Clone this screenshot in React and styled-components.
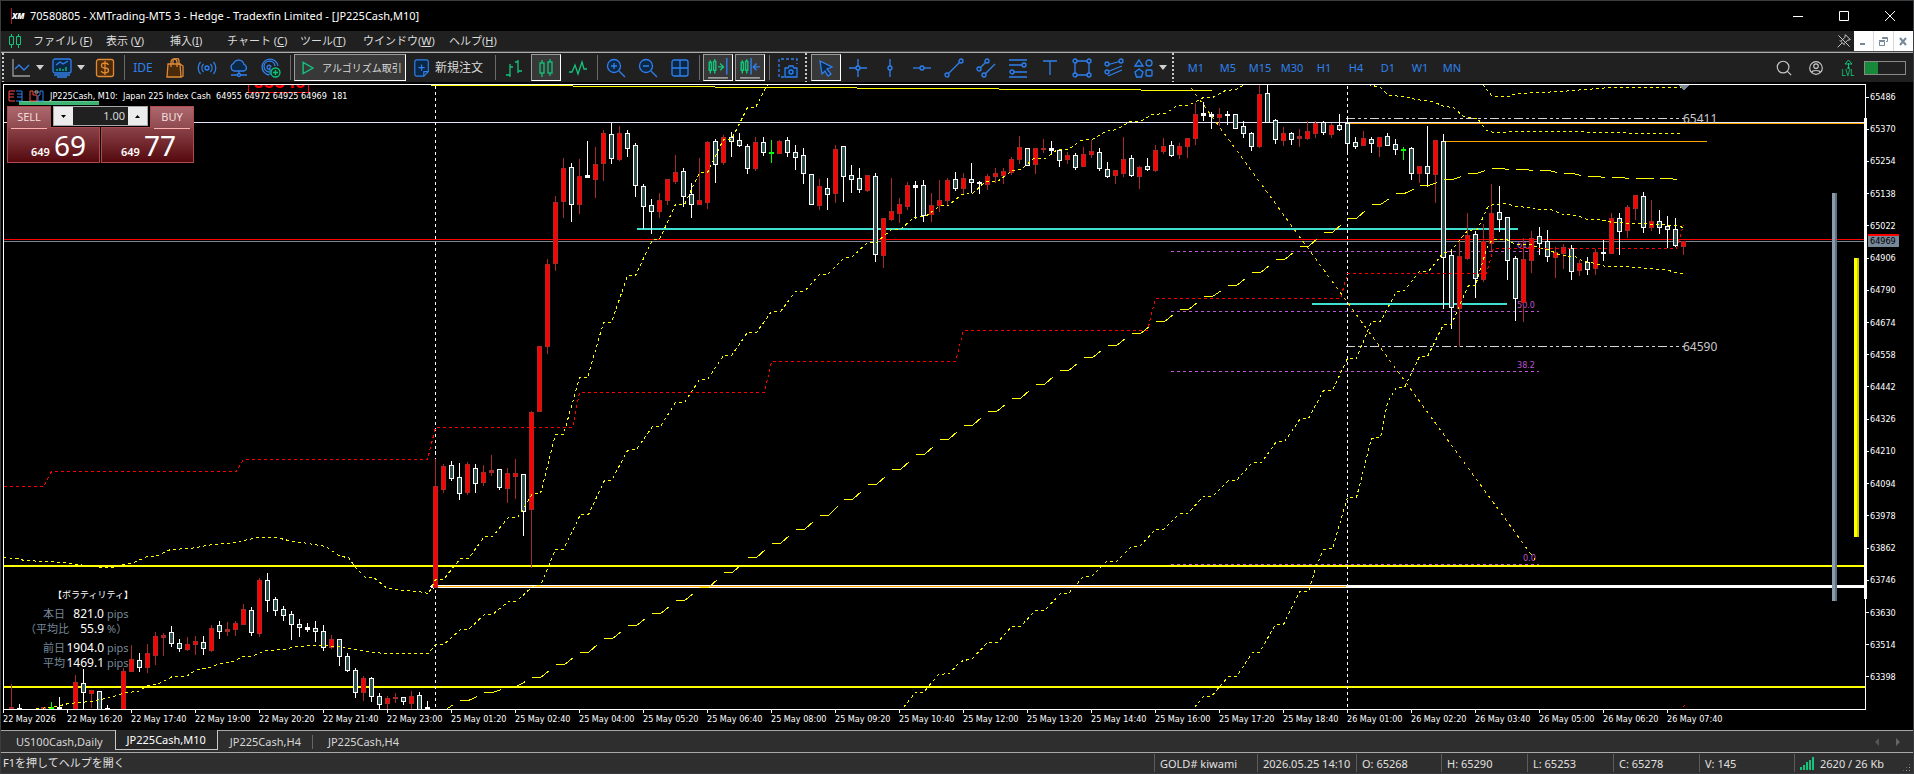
import React from "react";
import styled, { createGlobalStyle, css } from "styled-components";

const UI_FONT = `"Noto Sans", "Noto Sans CJK JP", sans-serif`;
const CHART_FONT = `"DejaVu Sans Condensed", "Noto Sans", sans-serif`;

const BLUE = "#2f80ed";
const GREEN = "#12c47c";
const SLATE = "#778899";

const GlobalStyle = createGlobalStyle`
  * { box-sizing: border-box; }
  body { margin: 0; background: #000; }
  button, input { font: inherit; color: inherit; margin: 0; padding: 0; border: 0; background: none; }
  ul { list-style: none; margin: 0; padding: 0; }
`;

/* ---------- window ---------- */

const Window = styled.div`
  display: flex;
  flex-direction: column;
  min-height: 100vh;
  border: 1px solid #3a3d40;
  background: #000;
  color: #d8d8d8;
  font-family: ${UI_FONT};
  font-size: 11px;
  line-height: 16px;
  overflow: hidden;
`;

const TitleBar = styled.header`
  display: flex;
  align-items: center;
  height: 30px;
  padding-left: 10px;
  color: #fff;
`;

const Brand = styled.span`
  width: 19px;
  font-size: 8px;
  font-style: italic;
  font-weight: 900;
  border-left: 1px solid #b02020;
`;

const Caption = styled.h1`
  flex: 1;
  margin: 0;
  font-size: 11px;
  font-weight: 400;
`;

const CaptionButton = styled.button`
  width: 46px;
  height: 30px;
  display: grid;
  place-items: center;
`;

const MenuBar = styled.nav`
  display: flex;
  align-items: center;
  height: 20px;
  padding-left: 8px;
  background: #202020;
`;

const MenuList = styled.ul`
  flex: 1;
  display: grid;
  grid-template-columns: 73px 64px 57px 73px 63px 86px auto;
  justify-content: start;
  padding-left: 12px;
`;

const MenuButton = styled.button`
  white-space: nowrap;
  color: #dcdcdc;
`;

const MdiButtons = styled.div`
  display: flex;
  align-self: stretch;
  gap: 1px;
  margin-left: 3px;
  background: #d8d8d8;
`;

const MdiButton = styled.button`
  width: 19px;
  display: grid;
  place-items: center;
  background: #fff;
`;

/* ---------- toolbar ---------- */

const ToolBar = styled.div`
  display: flex;
  align-items: center;
  gap: 2px;
  height: 31px;
  padding: 1px 7px 0 1px;
  background: #202020;
  border-top: 1px solid #4c4c4c;
  box-shadow: inset 0 1px #adadad;
`;

const Grip = styled.span`
  width: 4px;
  align-self: stretch;
  background: repeating-linear-gradient(#c8c8c8 0 2px, transparent 2px 4px) 0 0 / 2px 100% no-repeat;
`;

const Divider = styled.span`
  width: 4px;
  height: 25px;
  background: linear-gradient(#6a6a6a, #6a6a6a) 2px 0 / 1px 100% no-repeat;
`;

const pressed = css`
  background: #383838;
  border: 1px solid #fff;
  border-top-color: #9a9a9a;
  border-left-color: #9a9a9a;
`;

const ToolButton = styled.button`
  width: 30px;
  height: 27px;
  flex: none;
  display: grid;
  place-items: center;
  color: ${(p) => p.$color || BLUE};
  font-size: ${(p) => (p.$text ? "12px" : "11px")};
  ${(p) => p.$on && pressed}
`;

const DropTool = styled.button`
  width: 39px;
  height: 27px;
  flex: none;
  display: flex;
  align-items: center;
  justify-content: center;
  gap: 5px;
  color: ${BLUE};
`;

const AlgoButton = styled.button`
  width: 112px;
  height: 27px;
  display: flex;
  align-items: center;
  gap: 7px;
  padding-left: 6px;
  font-size: 10px;
  white-space: nowrap;
  ${pressed}
`;

const OrderButton = styled.button`
  width: 83px;
  height: 27px;
  display: flex;
  align-items: center;
  gap: 4px;
  padding-left: 5px;
  font-size: 12px;
  white-space: nowrap;
`;

const Timeframes = styled.div`
  display: flex;
  gap: 2px;
  margin-left: 3px;
`;

const ToolSpacer = styled.span`
  flex: 1;
`;

const Level = styled.span`
  display: flex;
  flex-direction: column;
  align-items: center;
  width: 20px;
  margin-left: 5px;
  color: ${GREEN};
  font-size: 8px;
  line-height: 8px;
`;

const LevelBar = styled.span`
  width: 42px;
  height: 14px;
  margin-left: 4px;
  border: 1px solid #8a8a8a;
  background: linear-gradient(#168a3a, #168a3a) 0 0 / 13px 100% no-repeat;
`;

/* ---------- chart ---------- */

const ChartArea = styled.main`
  flex: 1;
  display: grid;
  grid-template-columns: minmax(0, 1fr) 47px;
  grid-template-rows: minmax(0, 1fr) 20px;
  padding: 2px 0 0 2px;
  font-family: ${CHART_FONT};
  font-size: 9px;
  line-height: 12px;
  color: #fff;
`;

const Plot = styled.section`
  position: relative;
  min-height: 626px;
  border: 1px solid #fff;
  overflow: hidden;
`;

const PlotSvg = styled.svg`
  display: block;
  position: absolute;
  width: 100%;
  height: 100%;
`;

const PlotTitle = styled.div`
  position: absolute;
  top: 5px;
  left: 4px;
  display: flex;
  align-items: center;
  gap: 6px;
  white-space: pre;
`;

const PriceAxis = styled.ul`
  && {
    position: relative;
    display: flex;
    flex-direction: column;
    justify-content: space-between;
    padding: 7px 0 27px;
  }

  &::before {
    content: "";
    position: absolute;
    left: -2px;
    top: 34px;
    bottom: 111px;
    width: 3px;
    background: #fff;
  }
`;

const Price = styled.li`
  padding-left: 4px;
  background: linear-gradient(#fff, #fff) 0 50% / 3px 1px no-repeat;
`;

const LastPrice = styled.li`
  position: absolute;
  left: 2px;
  top: 150px;
  width: 31px;
  padding-left: 2px;
  line-height: 11px;
  border-top: 2px solid #f00;
  background: ${SLATE};
  color: #000;
`;

const TimeAxis = styled.ul`
  grid-column: 1 / -1;
  display: flex;
  overflow: hidden;
`;

const Time = styled.li`
  flex: 0 0 64px;
  padding-top: 3px;
  white-space: nowrap;
  background: linear-gradient(#fff, #fff) 0 0 / 1px 3px no-repeat;
`;

/* ---------- one click trading ---------- */

const OneClick = styled.div`
  position: absolute;
  top: 21px;
  left: 3px;
  display: flex;
  justify-content: space-between;
  width: 187px;
  background: #000;
  font-family: ${UI_FONT};
`;

const Deal = styled.button`
  display: flex;
  flex-direction: column;
  align-items: ${(p) => (p.$end ? "flex-end" : "flex-start")};
  width: 93px;
  color: #fff;
`;

const DealSide = styled.span`
  position: relative;
  z-index: 1;
  width: 44px;
  height: 22px;
  line-height: 19px;
  margin-bottom: -1px;
  font-size: 11px;
  color: #f0dede;
  border: 1px solid #ad4a4a;
  border-bottom: 0;
  background: linear-gradient(#ac686e, #8f4a50);
`;

const DealPrice = styled.span`
  display: flex;
  align-items: baseline;
  justify-content: center;
  gap: 4px;
  width: 100%;
  height: 36px;
  padding-left: ${(p) => (p.$end ? "2px" : "10px")};
  border: 1px solid #ad4a4a;
  background:
    linear-gradient(#ffb0b0, #ffb0b0) ${(p) => (p.$end ? "calc(100% - 3px)" : "3px")} 0 / 36px 1px no-repeat,
    linear-gradient(#8a4248, #55090e);
  font-size: 11px;
  font-weight: 600;
  line-height: 35px;
`;

const BigPips = styled.strong`
  font-size: 28px;
  font-weight: 400;
`;

const Volume = styled.div`
  position: absolute;
  z-index: 2;
  left: 46px;
  top: 0;
  display: flex;
  width: 95px;
  height: 20px;
  border: 1px solid #a8a8a8;
  background: #202020;
`;

const VolumeInput = styled.input`
  flex: 1;
  min-width: 0;
  padding-right: 3px;
  text-align: right;
  font-size: 11px;
  color: #d8d8d8;
`;

const Step = styled.button`
  width: 19px;
  display: grid;
  place-items: center;
  background: #ececec;
`;

/* ---------- volatility ---------- */

const Volatility = styled.div`
  position: absolute;
  left: 21px;
  bottom: 39px;
  width: 106px;
  font-family: ${UI_FONT};
  line-height: 15px;
`;

const VolTitle = styled.div`
  margin-bottom: 4px;
  padding-left: 28px;
  font-size: 9px;
  white-space: nowrap;
`;

const VolRow = styled.div`
  display: grid;
  grid-template-columns: 40px 39px 1fr;
  margin-bottom: ${(p) => (p.$last ? "4px" : "0")};
  color: ${SLATE};
  font-size: 11px;
  text-align: right;
  white-space: nowrap;

  b {
    font-size: 12px;
    font-weight: 400;
    color: #fff;
  }

  span:last-child {
    padding-left: 3px;
    text-align: left;
  }
`;

/* ---------- tabs and status ---------- */

const TabBar = styled.div`
  display: flex;
  height: 22px;
  background: #2e2e2e;
  border-top: 1px solid #a8a8a8;
`;

const Tab = styled.button`
  height: 19px;
  margin-top: 1px;
  padding: 0 12px 0 15px;
  color: #d6d6d6;
  ${(p) =>
    p.$on &&
    css`
      height: 20px;
      margin-top: -1px;
      padding: 0 11px;
      border: 1px solid #c8c8c8;
      border-top: 0;
      background: #262626;
      color: #fff;
    `}
  ${(p) =>
    p.$ruled &&
    css`
      padding-left: 12px;
      background: linear-gradient(#666, #666) 100% 50% / 1px 14px no-repeat;
    `}
`;

const TabArrows = styled.div`
  display: flex;
  align-items: center;
  gap: 16px;
  margin-left: auto;
  padding-right: 12px;
`;

const StatusBar = styled.footer`
  display: flex;
  height: 21px;
  background: #2e2e2e;
  border-top: 1px solid #a8a8a8;
  line-height: 19px;
  color: #e0e0e0;
`;

const Hint = styled.span`
  flex: 1;
  padding-left: 2px;
`;

const Cell = styled.span`
  display: flex;
  align-items: center;
  gap: 6px;
  width: ${(p) => p.$w}px;
  margin: 1px 0;
  padding-left: 5px;
  border-left: 1px solid #5c5c5c;
  white-space: nowrap;
`;

const SizeGrip = styled.span`
  width: 9px;
  height: 9px;
  margin: 0 2px 0 auto;
  align-self: flex-end;
  background: radial-gradient(#999 1px, transparent 1px) 0 0 / 3px 3px;
  clip-path: polygon(100% 0, 100% 100%, 0 100%);
`;

/* ---------- icons ---------- */

const Icon = ({ size = 20, children, w = 1.3, ...rest }) => (
  <svg
    width={size}
    height={size}
    viewBox="0 0 20 20"
    fill="none"
    stroke="currentColor"
    strokeWidth={w}
    aria-hidden="true"
    {...rest}
  >
    {children}
  </svg>
);

const NAVY = "#0b2746";

const Caret = () => (
  <svg width="8" height="5" aria-hidden="true">
    <path d="M0 0h8L4 5z" fill="#d0d0d0" />
  </svg>
);

const Node = ({ x, y }) => <circle cx={x} cy={y} r="2" fill={NAVY} />;

const icons = {
  chart: (
    <Icon>
      <path d="M2 1v17h17" stroke="#9a9a9a" />
      <path d="M4 11l4-4 5 5 5-5" />
    </Icon>
  ),
  indicators: (
    <Icon>
      <rect x="1" y="1" width="18" height="14" rx="2" fill={NAVY} />
      <path d="M4 7l4-3 3 2 5-3" />
      <path d="M5 13v-2M8 13v-3M11 13v-2M14 13v-4" stroke={GREEN} />
      <path d="M2 17h16M5 19h10" />
    </Icon>
  ),
  dollar: (
    <Icon stroke="#e08a35">
      <rect x="1.5" y="1.5" width="17" height="17" rx="2" fill="#4a2a08" />
      <path d="M13.500 7c-.5-1.500-2-2-3.500-2s-3.500.8-3.500 2.500S8 10 10 10s3.500.9 3.500 2.600S12 15 10 15s-3.300-.7-3.700-2.200M10 3v14" />
    </Icon>
  ),
  bag: (
    <Icon stroke="#e08a35">
      <path d="M3 6h12l1 13H2z" fill="#4a2a08" />
      <path d="M15 6l3 2v10l-2 1M6 9V4a3 3 0 0 1 6 0v5M8 6V3a3 3 0 0 1 6 0v4" />
    </Icon>
  ),
  signal: (
    <Icon>
      <circle cx="10" cy="10" r="2" fill={NAVY} />
      <path d="M6.500 6a6 6 0 0 0 0 8M13.500 6a6 6 0 0 1 0 8M3.500 4a9 9 0 0 0 0 12M16.500 4a9 9 0 0 1 0 12" />
    </Icon>
  ),
  cloud: (
    <Icon>
      <path d="M5 13a4 4 0 0 1-.5-7.500A5.500 5.500 0 0 1 15 6.500 3.400 3.400 0 0 1 15 13z" fill={NAVY} />
      <path d="M10 13v4M2 17h16" />
      <circle cx="10" cy="17" r="1.500" fill={NAVY} />
    </Icon>
  ),
  radar: (
    <Icon>
      <path d="M8 17A8 8 0 1 1 17 8M8 14a5.500 5.500 0 1 1 6-6M10 9a2 2 0 1 0-1 2" />
      <path d="M9 9v8" />
      <circle cx="14.500" cy="14.500" r="4.500" stroke={GREEN} fill="#0b3324" />
      <path d="M14.500 12v5M12 14.500h5" stroke={GREEN} />
    </Icon>
  ),
  play: (
    <Icon size={14} w="2" stroke={GREEN}>
      <path d="M3 2l14 8-14 8z" />
    </Icon>
  ),
  order: (
    <Icon size={18} style={{ color: BLUE }}>
      <path d="M4 1h11a2 2 0 0 1 2 2v11l-5 5H4a2 2 0 0 1-2-2V3a2 2 0 0 1 2-2z" fill={NAVY} />
      <path d="M17 14h-5v5M9.500 6v7M6 9.500h7" />
    </Icon>
  ),
  bars: (
    <Icon>
      <path d="M6 6v13M2 17h4M6 9h3M14 2v13M11 4h3M14 13h4" />
    </Icon>
  ),
  candles: (
    <Icon>
      <path d="M6 2v3M6 15v4M14 1v3M14 15v3" />
      <rect x="4" y="5" width="4" height="10" />
      <rect x="12" y="4" width="4" height="11" />
    </Icon>
  ),
  wave: (
    <Icon>
      <path d="M1 14h3l3-7 3 9 4-12 2 7h3" />
    </Icon>
  ),
  zoomIn: (
    <Icon>
      <circle cx="8" cy="8" r="6.500" fill={NAVY} />
      <path d="M13 13l6 6M8 5v6M5 8h6" />
    </Icon>
  ),
  zoomOut: (
    <Icon>
      <circle cx="8" cy="8" r="6.500" fill={NAVY} />
      <path d="M13 13l6 6M5 8h6" />
    </Icon>
  ),
  tile: (
    <Icon>
      <rect x="2" y="2" width="16" height="16" rx="2" fill={NAVY} />
      <path d="M10 2v16M2 10h16" />
    </Icon>
  ),
  scroll: (
    <Icon size={22}>
      <path d="M3 3v2M3 12v3M7 2v2M7 12v3M10 9h5M12 6l3 3-3 3" stroke={GREEN} />
      <path d="M2 5h2v7H2zM6 4h2v8H6z" stroke={GREEN} />
      <path d="M18 1v15" />
      <path d="M1 19h18" stroke="#b0b0b0" />
    </Icon>
  ),
  shift: (
    <Icon size={22}>
      <path d="M3 3v2M3 12v3M7 2v2M7 12v3" stroke={GREEN} />
      <path d="M2 5h2v7H2zM6 4h2v8H6z" stroke={GREEN} />
      <path d="M11 1v15M13 9h6M16 6l-3 3 3 3" />
      <path d="M1 19h18" stroke="#b0b0b0" />
    </Icon>
  ),
  camera: (
    <Icon>
      <path d="M6 19H1V1h18v5" strokeDasharray="3 2" />
      <path d="M7 10h3l1-2h4l1 2h3v9H7z" fill={NAVY} />
      <circle cx="13" cy="14" r="2" />
    </Icon>
  ),
  cursor: (
    <Icon>
      <path d="M4 3l12 6-5 2 4 5-3 2-3-5-3 3z" fill={NAVY} />
    </Icon>
  ),
  cross: (
    <Icon>
      <path d="M10 1v18M1 10h18" />
      <Node x="10" y="10" />
    </Icon>
  ),
  vline: (
    <Icon>
      <path d="M10 1v18" />
      <Node x="10" y="10" />
    </Icon>
  ),
  hline: (
    <Icon>
      <path d="M1 10h18" />
      <Node x="10" y="10" />
    </Icon>
  ),
  trend: (
    <Icon>
      <path d="M3 17L17 3" />
      <Node x="3" y="17" />
      <Node x="17" y="3" />
    </Icon>
  ),
  channel: (
    <Icon>
      <path d="M3 11l8-8M8 17L19 6" />
      <Node x="3" y="11" />
      <Node x="11" y="3" />
      <Node x="8" y="17" />
    </Icon>
  ),
  fibo: (
    <Icon>
      <path d="M1 2h18M1 7h14M5 14h14M1 19h18" />
      <Node x="16" y="7" />
      <Node x="4" y="14" />
    </Icon>
  ),
  label: (
    <Icon>
      <path d="M3 3h14M10 3v14" />
    </Icon>
  ),
  rect: (
    <Icon>
      <path d="M3 3h14v14H3z" />
      <Node x="3" y="3" />
      <Node x="17" y="3" />
      <Node x="3" y="17" />
      <Node x="17" y="17" />
    </Icon>
  ),
  fork: (
    <Icon>
      <path d="M3 7l14-4M3 14l15-6M4 18l14-6" />
      <Node x="3" y="6" />
      <Node x="17" y="3" />
      <Node x="3" y="14" />
    </Icon>
  ),
  shapes: (
    <Icon>
      <path d="M5 2l4 6H1z" fill={NAVY} />
      <circle cx="15" cy="5" r="3" />
      <path d="M5 11l4 3-1.500 5h-5L1 14z" fill={NAVY} />
      <rect x="12" y="12" width="6" height="6" rx="1" />
    </Icon>
  ),
  search: (
    <Icon size={18}>
      <circle cx="9" cy="9" r="6.500" />
      <path d="M13.500 13.500L18 18" />
    </Icon>
  ),
  user: (
    <Icon size={18}>
      <circle cx="10" cy="10" r="7" />
      <circle cx="10" cy="8" r="2.500" />
      <path d="M5 15c1-3 9-3 10 0" />
    </Icon>
  ),
};

/* ---------- data ---------- */

const menus = [
  ["ファイル (", "F"],
  ["表示 (", "V"],
  ["挿入(", "I"],
  ["チャート (", "C"],
  ["ツール(", "T"],
  ["ウインドウ(", "W"],
  ["ヘルプ(", "H"],
];

const drawTools = ["cross", "vline", "hline", "trend", "channel", "fibo", "label", "rect", "fork"];
const timeframes = ["M1", "M5", "M15", "M30", "H1", "H4", "D1", "W1", "MN"];

const prices = Array.from({ length: 19 }, (_, i) => 65486 - i * 116);

const times = [
  "22 May 2026", "22 May 16:20", "22 May 17:40", "22 May 19:00", "22 May 20:20", "22 May 21:40",
  "22 May 23:00", "25 May 01:20", "25 May 02:40", "25 May 04:00", "25 May 05:20", "25 May 06:40",
  "25 May 08:00", "25 May 09:20", "25 May 10:40", "25 May 12:00", "25 May 13:20", "25 May 14:40",
  "25 May 16:00", "25 May 17:20", "25 May 18:40", "26 May 01:00", "26 May 02:20", "26 May 03:40",
  "26 May 05:00", "26 May 06:20", "26 May 07:40",
];

// first x, then one candle every 8px: kind, high, low, body top, body bottom
const candleRuns = [
  [11, "r684,709,707,709 w704,709,708,709"],
  [43, "r707,709,707,709 g702,709,707,708 w697,709,707,709"],
  [75, "r675,709,682,709 w669,709,683,692 r690,707,690,693 w691,709,691,709 w705,709,708,709"],
  [
    123,
    `r668,709,671,709 r645,671,659,671 w653,671,660,667 r644,672,653,667 r632,664,636,655 r633,655,635,637
     w626,646,632,643 w639,651,643,648 r637,650,644,649 r636,654,641,644 w636,654,642,648 r625,651,628,650
     w621,638,625,631 r622,635,629,631 r621,635,623,629 r604,624,609,624 w607,635,610,632 r578,636,580,633
     w573,611,580,600 w597,615,599,610 w606,620,609,615 w611,639,614,624 w619,636,624,627 w623,631,627,629
     w621,641,628,631 w625,650,631,647 r635,648,639,647 w639,665,639,656 w653,671,656,670 w668,697,670,692
     r676,700,678,692 w677,701,678,696 w693,709,696,704 r696,709,698,703 r693,702,697,698 w697,704,697,701
     r691,709,696,703 w692,709,695,709 w701,709,707,709 r459,587,486,587 r464,492,466,489 w461,480,465,478
     w463,499,477,493 r462,494,464,492 w464,492,468,483 r465,485,472,482 r455,475,470,472 w469,489,469,487
     r468,502,473,488 r459,498,473,476 w474,535,474,511 r411,567,412,509 r346,411,346,411 r259,353,264,346
     r196,270,202,263 r158,217,168,201 w163,221,167,204 r159,213,176,204 w141,177,175,177 r147,197,164,179
     r130,180,133,163 w123,163,134,158 r126,160,133,159 w130,156,133,148 w143,196,145,185 w184,228,186,206
     w199,233,205,211 r193,217,200,211 r179,204,179,200 r155,183,172,181 w168,206,171,196 w183,217,194,204
     r158,204,200,204 r141,208,142,202 w139,182,141,164 r135,164,137,162 w132,156,137,141 w133,146,140,145
     w144,173,146,168 r137,170,142,168 w137,155,142,152 g140,162,152,153 r140,153,141,153 w137,156,140,152
     w145,169,152,157 w148,183,155,173 w174,204,174,204 r179,209,186,205 w178,209,188,194 r145,202,149,193
     w146,201,146,176 w165,192,175,179 w168,192,178,189 r175,191,175,190 w173,261,176,254 r218,267,218,255
     r178,220,211,219 r198,222,204,213 r182,209,185,206 w181,218,185,187 w180,221,185,215 r193,221,205,214
     r180,211,200,205 r178,205,180,200 w172,190,179,188 r173,193,178,188 w163,192,179,182 w181,193,182,183
     r174,189,176,184 r168,182,173,176 r168,183,171,175 r157,174,159,172 r136,163,147,159 w148,165,148,165
     r148,173,148,164 r139,152,148,149 w141,153,148,150 w149,166,150,160 r152,163,155,159 w153,169,155,167
     r147,166,154,166 r140,157,151,154 w148,170,152,168 w162,177,169,176 r170,183,170,175 r137,176,159,173
     w155,176,158,175 r166,188,167,176 w158,170,166,169 r145,171,150,170 r138,153,146,151 w141,156,145,155
     r143,158,146,154 r138,157,138,146 r103,144,114,138 w102,120,113,115 w112,128,114,116 r108,125,114,117
     w111,124,114,115 w114,128,114,128 w121,137,126,133 w132,150,133,146 r85,147,94,146 w85,122,93,122
     w119,143,120,139 r127,145,133,140 w132,144,133,139 r129,146,136,138 r121,139,131,138 r121,137,123,133
     w121,134,122,132 r123,137,125,134 w114,130,125,129 w118,152,123,143 w137,148,142,146 r131,145,138,145
     w137,152,139,143 r137,156,137,146 w133,145,136,145 w139,154,144,149 g147,159,149,150 w147,179,148,173
     r166,182,166,173 w126,186,166,173 r140,202,140,174 w134,308,141,257 w250,328,255,307 r240,346,256,308
     r213,259,235,258 w231,297,234,278 r224,281,241,279 r184,250,213,243 w186,231,212,219 w217,279,217,260
     w256,320,258,298 r238,321,259,302 r231,272,238,260 w227,254,236,243 w230,261,241,256 r247,277,252,257
     r244,268,247,253 w245,279,248,271 r260,275,263,270 w257,274,262,269 r249,274,252,268 w240,260,252,253
     r213,253,218,253 w213,254,218,231 r205,237,207,230 r195,219,195,208 w192,232,196,227 r200,230,221,227
     w210,233,221,227 w216,247,226,229 w218,246,229,245 r241,254,241,246`,
  ],
];

const candles = candleRuns.flatMap(([start, run]) =>
  run
    .trim()
    .split(/\s+/)
    .map((item, i) => {
      const [high, low, top, bottom] = item.slice(1).split(",").map(Number);
      return { x: start + i * 8, kind: item[0], high, low, top, bottom };
    })
);

const candleColors = {
  r: { line: "#a52a2a", body: "#ff0000" },
  w: { line: "#ffffff", body: "#2f4f4f" },
  g: { line: "#00ff00", body: "#00ff00" },
};

const bands = [
  `3,557 16,558 24,560 45,561 65,562 78,564 100,567 115,567 122,564 131,563 147,556 155,556 170,549 190,548
   212,544 228,543 243,540 258,537 276,537 292,541 308,543 325,546 340,556 348,557 355,567 365,577 373,577
   387,588 405,590 418,591 428,593 435,579 443,579 451,569 460,558 468,558 484,536 492,536 508,517 517,517
   524,506 532,493 540,493 555,434 563,434 579,377 587,377 603,322 611,322 627,275 635,275 652,239 659,239
   675,204 684,204 699,172 707,172 723,139 731,139 747,107 755,107 767,84`,
  `36,708 52,707 68,703 90,701 110,697 125,692 138,691 147,685 157,684 172,676 186,676 196,669 206,668
   220,663 230,662 243,656 251,656 265,650 284,649 295,646 315,645 340,646 355,649 365,651 384,653 428,653
   435,644 443,644 460,629 468,629 484,614 492,614 508,601 516,601 532,586 540,585 555,549 563,549 580,514
   588,514 604,480 611,480 627,450 636,449 652,426 660,426 675,402 684,402 699,379 707,379 723,355 731,355
   747,332 756,332 771,311 780,311 795,291 804,291 819,274 827,274 844,257 851,257 867,242 876,242 891,229
   900,229 913,217 925,216 940,205 948,205 961,194 972,193 985,181 997,181 1012,170 1021,169 1033,158
   1045,158 1057,149 1068,149 1080,140 1092,139 1105,131 1116,129 1130,121 1140,121 1152,114 1165,113
   1177,105 1188,105 1203,97 1212,97 1225,90 1236,89 1244,84`,
  `903,707 915,692 923,692 938,674 949,673 960,661 972,658 987,642 997,642 1011,626 1020,626 1035,610
   1044,610 1060,593 1068,593 1083,576 1091,576 1106,561 1116,561 1131,546 1139,546 1155,529 1163,529
   1179,513 1187,513 1203,496 1212,496 1228,480 1236,480 1252,462 1261,462 1276,441 1284,441 1300,418
   1308,418 1323,390 1332,390 1347,358 1356,358 1371,321 1380,321 1396,291 1404,290 1419,271 1428,271
   1443,252 1450,251 1467,230 1477,229 1487,207 1492,204 1506,203 1515,206 1530,207 1540,209 1550,209
   1563,214 1577,215 1587,219 1600,219 1612,222 1635,223 1660,224 1675,225 1683,227`,
  `1194,707 1203,696 1211,696 1220,685 1228,676 1236,676 1252,652 1259,652 1275,624 1283,624 1299,591
   1308,591 1316,565 1323,549 1332,548 1347,497 1356,497 1371,438 1380,437 1387,402 1396,387 1404,387
   1419,356 1427,356 1443,324 1451,324 1459,305 1468,285 1475,285 1481,265 1487,246 1492,239 1506,239
   1515,244 1530,244 1540,248 1548,249 1560,255 1575,256 1583,261 1595,263 1605,266 1625,266 1645,268
   1665,269 1675,272 1683,273`,
  `1368,84 1380,87 1388,95 1405,96 1415,99 1432,101 1444,106 1453,107 1463,116 1477,118 1486,130 1493,132
   1520,131 1570,131 1600,132 1650,133 1675,133 1683,134`,
  `1482,84 1492,96 1508,96 1516,93 1540,92 1560,91 1585,89 1610,87 1683,87`,
];

const redSteps = `3,486 43,486 51,471 236,471 243,459 427,459 435,427 572,427 579,392 764,392 771,361
  955,361 963,330 1147,330 1155,298 1340,298 1347,273 1486,273 1493,248 1676,248 1683,225`;

// slow average, one value every 24px starting at x = 435
const slow = [
  710, 700, 692, 686, 677, 664, 652, 638, 625, 613, 600, 587, 572, 557, 543, 529, 515, 499, 484, 469, 454,
  439, 425, 411, 398, 384, 370, 357, 345, 333, 321, 309, 296, 285, 272, 259, 246, 232, 218, 204, 193, 185,
  179, 173, 168, 169, 170, 173, 176, 177, 178, 178, 179,
];

const slowPath = slow
  .slice(0, -1)
  .map((y, i) => `M${435 + i * 24} ${y}h9l9 ${Math.round(((slow[i + 1] - y) * 9) / 16)}`)
  .join("");

const fibs = [
  ["61.8", 251, 1517],
  ["50.0", 311, 1517],
  ["38.2", 371, 1517],
  ["0.0", 564, 1523],
];

const volRows = [
  ["本日", "821.0", "pips"],
  ["（平均比", "55.9", "%）", true],
  ["前日", "1904.0", "pips"],
  ["平均", "1469.1", "pips"],
];

const statusCells = [
  ["GOLD# kiwami", 103],
  ["2026.05.25 14:10", 99],
  ["O: 65268", 85],
  ["H: 65290", 86],
  ["L: 65253", 86],
  ["C: 65278", 86],
  ["V: 145", 95],
];

/* ---------- chart drawing ---------- */

const HLine = ({ y, from = 0, to = "100%", h = 1, color }) => (
  <svg x={from} y={y - 85} width={to === "100%" ? "100%" : to - from} height={h}>
    <rect width="100%" height={h} fill={color} />
  </svg>
);

const Candle = ({ x, kind, high, low, top, bottom }) => {
  const { line, body } = candleColors[kind];
  const height = Math.max(bottom - top, 1);
  return (
    <>
      <rect x={x} y={high} width="1" height={low - high + 1} fill={line} />
      <rect x={x - 2} y={top} width="5" height={height + 1} fill={line} />
      {height > 2 && <rect x={x - 1} y={top + 1} width="3" height={height - 1} fill={body} />}
    </>
  );
};

const Drawing = () => (
  <PlotSvg shapeRendering="crispEdges">
    <HLine y={122} color="#e6e6fa" />
    <HLine y={123} from={1344} color="#ffa500" />
    <HLine y={228} from={633} to={1514} h={2} color="#40e0d0" />
    <HLine y={303} from={1308} to={1503} h={2} color="#40e0d0" />
    <HLine y={239} color="#f00" />
    <HLine y={241} color={SLATE} />
    <HLine y={565} h={2} color="#ff0" />
    <HLine y={686} h={2} color="#ff0" />
    <HLine y={585} from={431} h={3} color="#fff" />
    <HLine y={586} from={431} to={1342} color="#ffa500" />
    <HLine y={141} from={1440} to={1703} color="#ffa500" />

    <g transform="translate(-3.5 -84.5)" fill="none" stroke="#fff">
      <path d="M435 85V709M1347 85V709" strokeDasharray="3 3" />
      <path d="M430 586l3-2v4z" fill="#fff" />
      <g stroke="#ba55d3" strokeDasharray="3 3">
        {fibs.map(([name, y]) => (
          <path key={name} d={`M1170 ${y}H1538`} />
        ))}
      </g>
      <path d="M1345 118H1683M1345 346H1683" stroke="#d3d3d3" strokeDasharray="9 3 3 3 3 3" />
      <path d="M430 85H572M572 86H714M714 87H856M856 88H998M998 89H1140M1140 90H1211" stroke="#ff0" />
    </g>

    <g transform="translate(-4 -85)">
      {fibs.map(([name, y, x]) => (
        <text key={name} x={x} y={y - 3} fill="#ba55d3" fontSize="9">
          {name}
        </text>
      ))}
      {candles.map((c) => (
        <Candle key={c.x} {...c} />
      ))}
    </g>

    <g transform="translate(-3.5 -84.5)" fill="none" stroke="#ff0">
      {bands.map((points) => (
        <polyline key={points} points={points} strokeDasharray="3 3" />
      ))}
      <path d={slowPath} />
      <polyline points={redSteps} stroke="#f00" strokeDasharray="3 3" />
      <path d="M1682 707l2-2" stroke="#f00" />
      <path d="M1191 88L1538 564" stroke="#ffd700" strokeDasharray="3 4" />
    </g>

    <g transform="translate(-4 -85)">
      <path d="M1678 85h11l-5 6z" fill={SLATE} />
      <rect x="1832" y="193" width="3" height="408" fill="#8a9bac" />
      <rect x="1835" y="193" width="2" height="408" fill="#5f6f80" />
      <rect x="1854" y="258" width="3" height="279" fill="#ff0" />
      <rect x="1857" y="258" width="2" height="279" fill="#cccc00" />
      <rect x="19" y="101" width="80" height="4" fill="#3cb371" />
      <rect x="19" y="101" width="80" height="1" fill="#63c78f" />
      <g fill="#c8c8c8" fontFamily="Noto Sans" fontSize="12">
        <text x="1683" y="123">65411</text>
        <text x="1683" y="351">64590</text>
      </g>
      <path d="M248 80h60v12h-60z" fill="none" stroke="#f00" />
      <text x="253" y="88" fill="#f00" fontFamily="Liberation Sans" fontSize="19" fontWeight="700">
        65549
      </text>
    </g>
  </PlotSvg>
);

const DepthIcon = () => (
  <svg width="15" height="12" fill="none" aria-hidden="true">
    <path d="M7 1H1v10h6M1 4h5M1 7h5" stroke="#ff4a4a" />
    <path d="M8 1h6v10H8M9 4h5M9 7h5" stroke={BLUE} />
  </svg>
);

const TradeIcon = () => (
  <svg width="15" height="12" fill="none" aria-hidden="true">
    <path d="M1 1h3v4h4v6H1z" stroke="#ff4a4a" />
    <path d="M14 1h-3v4l-2 1v5h5z" stroke={BLUE} />
    <path d="M6 1h3v2H6z" stroke="#aaa" />
  </svg>
);

const Chart = () => (
  <ChartArea>
    <Plot>
      <Drawing />
      <PlotTitle>
        <DepthIcon />
        <TradeIcon />
        <span>JP225Cash, M10:  Japan 225 Index Cash  64955 64972 64925 64969  181</span>
      </PlotTitle>
      <OneClick>
        <Deal>
          <DealSide>SELL</DealSide>
          <DealPrice>
            649<BigPips>69</BigPips>
          </DealPrice>
        </Deal>
        <Volume>
          <Step aria-label="decrease volume">
            <svg width="5" height="3"><path d="M0 0h5L2.500 3z" /></svg>
          </Step>
          <VolumeInput aria-label="volume" defaultValue="1.00" />
          <Step aria-label="increase volume">
            <svg width="5" height="3"><path d="M0 3h5L2.500 0z" /></svg>
          </Step>
        </Volume>
        <Deal $end>
          <DealSide>BUY</DealSide>
          <DealPrice $end>
            649<BigPips>77</BigPips>
          </DealPrice>
        </Deal>
      </OneClick>
      <Volatility>
        <VolTitle>【ボラティリティ】</VolTitle>
        {volRows.map(([name, value, unit, last]) => (
          <VolRow key={name} $last={last}>
            <span>{name}</span>
            <b>{value}</b>
            <span>{unit}</span>
          </VolRow>
        ))}
      </Volatility>
    </Plot>
    <PriceAxis>
      {prices.map((p) => (
        <Price key={p}>{p}</Price>
      ))}
      <LastPrice>64969</LastPrice>
    </PriceAxis>
    <TimeAxis>
      {times.map((t) => (
        <Time key={t}>{t}</Time>
      ))}
    </TimeAxis>
  </ChartArea>
);

const App = () => (
  <Window>
    <GlobalStyle />
    <TitleBar>
      <Brand>XM</Brand>
      <Caption>70580805 - XMTrading-MT5 3 - Hedge - Tradexfin Limited - [JP225Cash,M10]</Caption>
      <CaptionButton aria-label="minimize">
        <svg width="10" height="10"><path d="M0 5.500h10" stroke="#fff" /></svg>
      </CaptionButton>
      <CaptionButton aria-label="maximize">
        <svg width="10" height="10"><path d="M.5.5h9v9h-9z" fill="none" stroke="#fff" /></svg>
      </CaptionButton>
      <CaptionButton aria-label="close">
        <svg width="10" height="10"><path d="M0 0l10 10M10 0L0 10" stroke="#fff" /></svg>
      </CaptionButton>
    </TitleBar>

    <MenuBar>
      <svg width="12" height="14" fill="none" stroke={GREEN} aria-hidden="true">
        <path d="M2.500 0v2M2.500 11v3M9.500 0v2M9.500 11v3M.5 2.500h4v8h-4zM7.500 2.500h4v8h-4z" />
      </svg>
      <MenuList>
        {menus.map(([name, hotkey]) => (
          <li key={hotkey}>
            <MenuButton>
              {name}
              <u>{hotkey}</u>)
            </MenuButton>
          </li>
        ))}
      </MenuList>
      <Icon size={14}>
        <path d="M1 19l6-6M4 9l7 7M6 10l5-5 1-4 7 7-4 1-5 5M2 2l16 16" />
      </Icon>
      <MdiButtons>
        <MdiButton aria-label="minimize chart">
          <svg width="9" height="9"><path d="M1 7h5" stroke={SLATE} strokeWidth="2" /></svg>
        </MdiButton>
        <MdiButton aria-label="restore chart">
          <svg width="9" height="9" fill="none" stroke={SLATE}>
            <path d="M3.500 2V.5h5v4H7M.5 4.500h5v4h-5zM0 3.500h6M3 1.500h6" />
          </svg>
        </MdiButton>
        <MdiButton aria-label="close chart">
          <svg width="9" height="9"><path d="M1 1l6 7M7 1L1 8" stroke={SLATE} strokeWidth="2" /></svg>
        </MdiButton>
      </MdiButtons>
    </MenuBar>

    <ToolBar>
      <Grip />
      <DropTool aria-label="chart type">{icons.chart}<Caret /></DropTool>
      <DropTool aria-label="indicators">{icons.indicators}<Caret /></DropTool>
      <ToolButton aria-label="symbols">{icons.dollar}</ToolButton>
      <Divider />
      <ToolButton $text>IDE</ToolButton>
      <ToolButton aria-label="market">{icons.bag}</ToolButton>
      <ToolButton aria-label="signals">{icons.signal}</ToolButton>
      <ToolButton aria-label="vps">{icons.cloud}</ToolButton>
      <ToolButton aria-label="copy trading">{icons.radar}</ToolButton>
      <Divider />
      <AlgoButton>{icons.play}アルゴリズム取引</AlgoButton>
      <OrderButton>{icons.order}新規注文</OrderButton>
      <Divider />
      <ToolButton $color={GREEN} aria-label="bar chart">{icons.bars}</ToolButton>
      <ToolButton $color={GREEN} $on aria-label="candlesticks">{icons.candles}</ToolButton>
      <ToolButton $color={GREEN} aria-label="line chart">{icons.wave}</ToolButton>
      <Divider />
      <ToolButton aria-label="zoom in">{icons.zoomIn}</ToolButton>
      <ToolButton aria-label="zoom out">{icons.zoomOut}</ToolButton>
      <ToolButton aria-label="tile windows">{icons.tile}</ToolButton>
      <Divider />
      <ToolButton $on aria-label="auto scroll">{icons.scroll}</ToolButton>
      <ToolButton $on aria-label="chart shift">{icons.shift}</ToolButton>
      <Divider />
      <ToolButton aria-label="screenshot">{icons.camera}</ToolButton>
      <Grip />
      <ToolButton $on aria-label="cursor">{icons.cursor}</ToolButton>
      {drawTools.map((name) => (
        <ToolButton key={name} aria-label={name}>{icons[name]}</ToolButton>
      ))}
      <DropTool aria-label="shapes">{icons.shapes}<Caret /></DropTool>
      <Grip />
      <Timeframes>
        {timeframes.map((tf) => (
          <ToolButton key={tf}>{tf}</ToolButton>
        ))}
      </Timeframes>
      <ToolSpacer />
      <ToolButton $color="#c8c8c8" aria-label="search">{icons.search}</ToolButton>
      <ToolButton $color="#c8c8c8" aria-label="account">{icons.user}</ToolButton>
      <Level>
        <svg width="9" height="10" fill="none" stroke={GREEN}>
          <path d="M4.500 10V4M1 5l3.500-4L8 5zM3 9h3" />
        </svg>
        LVL
      </Level>
      <LevelBar />
    </ToolBar>

    <Chart />

    <TabBar>
      <Tab>US100Cash,Daily</Tab>
      <Tab $on>JP225Cash,M10</Tab>
      <Tab $ruled>JP225Cash,H4</Tab>
      <Tab>JP225Cash,H4</Tab>
      <TabArrows>
        <svg width="5" height="8"><path d="M4 0v8L0 4z" fill="#555" /></svg>
        <svg width="5" height="8"><path d="M0 0v8l4-4z" fill="#666" /></svg>
      </TabArrows>
    </TabBar>

    <StatusBar>
      <Hint>F1を押してヘルプを開く</Hint>
      {statusCells.map(([text, w]) => (
        <Cell key={text} $w={w}>{text}</Cell>
      ))}
      <Cell $w={119}>
        <svg width="14" height="13" aria-hidden="true">
          <path d="M1 13v-3M4 13V8M7 13V5M10 13V3M13 13V0" stroke={GREEN} strokeWidth="2" />
        </svg>
        2620 / 26 Kb
        <SizeGrip />
      </Cell>
    </StatusBar>
  </Window>
);

export default App;
